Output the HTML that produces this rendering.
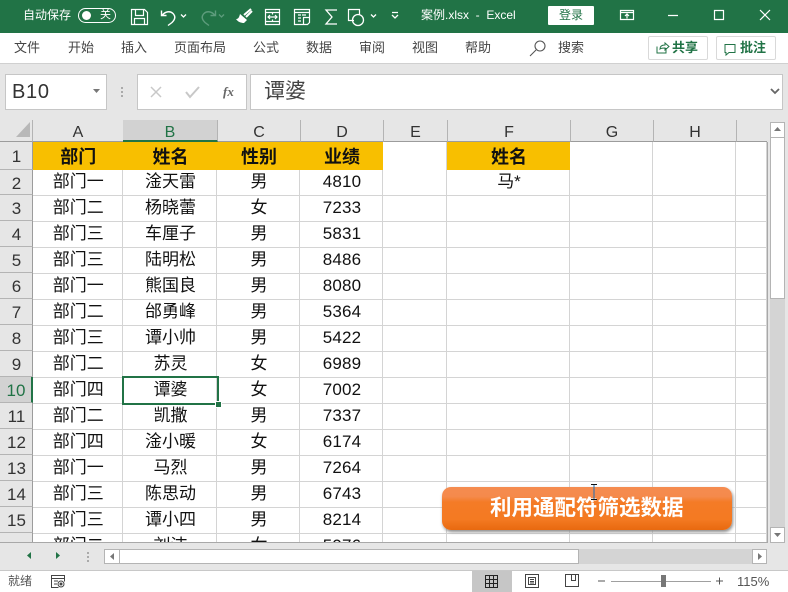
<!DOCTYPE html>
<html lang="zh"><head><meta charset="utf-8"><title>案例.xlsx - Excel</title>
<style>
html,body{margin:0;padding:0;width:788px;height:592px;overflow:hidden;background:#e6e6e6}
body{position:relative;font-family:"Liberation Sans","Noto Sans CJK SC",sans-serif;color:#222}
.a{position:absolute}
.t{position:absolute;white-space:nowrap;line-height:1}
svg{position:absolute;overflow:visible}
#tb{left:0;top:0;width:788px;height:33px;background:#217346}
#rb{left:0;top:33px;width:788px;height:30px;background:#fff;border-bottom:1px solid #d0d0d0}
.tab{font-size:13px;color:#444;top:41px}
.box{background:#fff;border:1px solid #c6c6c6;box-sizing:border-box}
#g{left:33px;top:142px;width:734px;height:400px;overflow:hidden;background:#fff}
table{border-collapse:collapse;table-layout:fixed;width:734px;position:absolute;left:-1px;top:0}
td{padding:0 0 1px 3px;border-right:1px solid #d4d4d4;border-bottom:1px solid #d4d4d4;line-height:23px;text-align:center;font-size:17px;color:#111;overflow:hidden;white-space:nowrap;box-sizing:border-box;height:26px}
td.n{font-size:17px;letter-spacing:.2px}
tr.h td{height:28px;padding:2px 0 0 3px;font-size:18px;font-weight:bold;border-bottom:none}
tr.h td.y{background:#f8bf00;border-right-color:#f8bf00}
.rh{position:absolute;left:0;width:33px;padding-left:1px;text-align:center;background:#e6e6e6;border-bottom:1px solid #b4b4b4;border-right:1px solid #9c9c9c;box-sizing:border-box;font-size:17px;line-height:28px;height:26px;color:#333}
.ch{position:absolute;top:120px;height:22px;background:#e6e6e6;border-right:1px solid #b4b4b4;box-sizing:border-box;text-align:center;font-size:16px;line-height:25px;color:#333;border-bottom:1px solid #9c9c9c}
</style></head><body>

<div class="a" id="tb"></div>
<div class="t" style="left:23px;top:9px;font-size:12px;color:#fff">自动保存</div>
<div class="a" style="left:78px;top:8px;width:38px;height:15px;border:1px solid #fff;border-radius:8px;box-sizing:border-box"></div>
<div class="a" style="left:82px;top:11px;width:9px;height:9px;background:#fff;border-radius:50%"></div>
<div class="t" style="left:100px;top:10px;font-size:11px;color:#fff">关</div>

<svg style="left:0;top:0" width="788" height="33" fill="none" stroke="#fff" stroke-width="1.2">
<path d="M131.500 9.500h13l3 3v12h-16zM135.500 9.500v6h8v-6M134.500 24.500v-6h10v6"/>
<path d="M161.500 10.500v5h5M162 15.500c3-4 8-5 11-2 3 3 2 6-1 9l-4 3" stroke-width="1.400"/>
<path d="M181 14.500l2.500 2.500 2.500-2.500" stroke-width="1.300"/>
<g stroke="#5d9c7c"><path d="M215.500 10.500v5h-5M215 15.500c-3-4-8-5-11-2-3 3-2 6 1 9l4 3" stroke-width="1.400"/><path d="M219 14.500l2.500 2.500 2.500-2.500" stroke-width="1.300"/></g>
<path d="M251 9l-7 6M252 11l-6 6" stroke-width="2"/><path d="M240 14l7 6-3 3c-3 0-6-1-8-4 2 0 3-1 4-5z" fill="#fff" stroke="none"/>
<path d="M265.500 9.500h14v15h-14zM265.500 12.500h14M265.500 21.500h14M272.500 12.500v2M272.500 19.500v2M268 17h9M270 15l-2 2 2 2M275 15l2 2-2 2"/>
<path d="M294.500 9.500h15v3h-15zM294.500 12.500v12h9M309.500 12.500v6M298 15h3M302 15h4M298 18h3M298 21h3M303.500 17.500h6v5l-2 2h-4z"/>
<path d="M337 10h-11l6 7-6 7h11" stroke-width="1.300"/>
<path d="M354 20.500h-5.500v-11h11v5"/><circle cx="358" cy="20" r="5.500" stroke-width="1.300"/>
<path d="M371 14.500l2.500 2.500 2.500-2.500" stroke-width="1.300"/>
<path d="M392 12.500h6M392 15l3 3 3-3" stroke-width="1.300"/>
<path d="M620.500 10.500h13v9h-13zM620.500 12.500h13M627 18.500v-4M625 16l2-2 2 2"/>
<path d="M668 15.500h10M714.500 10.500h9v9h-9zM760 10l10 10M770 10l-10 10"/>
</svg>
<div class="t" style="left:421px;top:9px;font-size:12px;color:#fff">案例.xlsx&nbsp; -&nbsp; Excel</div>
<div class="a" style="left:548px;top:6px;width:46px;height:19px;background:#fff;border-radius:1px"></div>
<div class="t" style="left:559px;top:9px;font-size:12px;color:#217346">登录</div>

<div class="a" id="rb"></div>
<div class="t tab" style="left:14px">文件</div>
<div class="t tab" style="left:68px">开始</div>
<div class="t tab" style="left:121px">插入</div>
<div class="t tab" style="left:174px">页面布局</div>
<div class="t tab" style="left:253px">公式</div>
<div class="t tab" style="left:306px">数据</div>
<div class="t tab" style="left:359px">审阅</div>
<div class="t tab" style="left:412px">视图</div>
<div class="t tab" style="left:465px">帮助</div>
<svg style="left:0;top:0" width="788" height="64" fill="none" stroke="#555" stroke-width="1.100"><circle cx="540" cy="46" r="5"/><path d="M536 50l-6 6"/></svg>
<div class="t tab" style="left:558px">搜索</div>
<div class="a" style="left:648px;top:36px;width:60px;height:24px;border:1px solid #d9d9d9;border-radius:2px;box-sizing:border-box"></div>
<div class="a" style="left:716px;top:36px;width:60px;height:24px;border:1px solid #d9d9d9;border-radius:2px;box-sizing:border-box"></div>
<svg style="left:0;top:0" width="788" height="64" fill="none" stroke="#217346" stroke-width="1">
<path d="M657 46.500v6.500h9v-5M660 49c0-3 2-4 5-4v-2l4 3.500-4 3.500v-2c-2 0-4 0-5 1z"/>
<path d="M725 44.500h10v8h-6l-3 2.500v-2.500h-1z"/></svg>
<div class="t" style="left:672px;top:41px;font-size:13px;font-weight:bold;color:#217346">共享</div>
<div class="t" style="left:740px;top:41px;font-size:13px;font-weight:bold;color:#217346">批注</div>

<div class="a box" style="left:5px;top:74px;width:102px;height:36px"></div>
<div class="t" style="left:12px;top:82px;font-size:20px;letter-spacing:.7px;color:#333">B10</div>
<div class="a box" style="left:137px;top:74px;width:110px;height:36px"></div>
<div class="t" style="left:223px;top:85px;font-size:13px;font-family:'Liberation Serif',serif;font-style:italic;font-weight:bold;color:#666">fx</div>
<div class="a box" style="left:250px;top:74px;width:533px;height:36px"></div>
<div class="t" style="left:264px;top:81px;font-size:21px;color:#444">谭婆</div>
<svg style="left:0;top:0" width="788" height="120" fill="none">
<path d="M93 89h7l-3.500 4z" fill="#777"/>
<path d="M122 87v2M122 91v2M122 95v2" stroke="#aaa" stroke-width="2"/>
<path d="M151 87l10 10M161 87l-10 10" stroke="#c8c8c8" stroke-width="1.500"/>
<path d="M186 92l4 5 9-10" stroke="#c8c8c8" stroke-width="2"/>
<path d="M771 89l4 4 4-4" stroke="#666" stroke-width="1.800"/>
</svg>

<div class="a" style="left:0;top:120px;width:33px;height:22px;background:#e6e6e6;border-right:1px solid #b4b4b4;border-bottom:1px solid #9c9c9c;box-sizing:border-box"></div>
<svg style="left:0;top:0" width="40" height="142"><path d="M30 122v15h-14z" fill="#b8b8b8"/></svg>
<div class="ch" style="left:33px;width:91px">A</div>
<div class="ch" style="left:123px;width:95px;background:#d2d2d2;color:#217346;border-bottom:2px solid #217346">B</div>
<div class="ch" style="left:218px;width:83px">C</div>
<div class="ch" style="left:301px;width:83px">D</div>
<div class="ch" style="left:384px;width:64px">E</div>
<div class="ch" style="left:448px;width:123px">F</div>
<div class="ch" style="left:571px;width:83px">G</div>
<div class="ch" style="left:654px;width:83px">H</div>
<div class="ch" style="left:737px;width:30px;border-right:none"></div>

<div class="rh" style="top:142px;height:28px;line-height:30px">1</div>
<div class="rh" style="top:170px;height:25px">2</div>
<div class="rh" style="top:195px">3</div>
<div class="rh" style="top:221px">4</div>
<div class="rh" style="top:247px">5</div>
<div class="rh" style="top:273px">6</div>
<div class="rh" style="top:299px">7</div>
<div class="rh" style="top:325px">8</div>
<div class="rh" style="top:351px">9</div>
<div class="rh" style="top:377px;background:#d2d2d2;color:#217346;border-right:2px solid #217346">10</div>
<div class="rh" style="top:403px">11</div>
<div class="rh" style="top:429px">12</div>
<div class="rh" style="top:455px">13</div>
<div class="rh" style="top:481px">14</div>
<div class="rh" style="top:507px">15</div>
<div class="rh" style="top:533px;height:9px;border-bottom:none"></div>

<div class="a" id="g">
<table>
<colgroup><col style="width:90px"><col style="width:94px"><col style="width:83px"><col style="width:83px"><col style="width:64px"><col style="width:123px"><col style="width:83px"><col style="width:83px"><col style="width:31px"></colgroup>
<tr class="h"><td class="y">部门</td><td class="y">姓名</td><td class="y">性别</td><td class="y">业绩</td><td></td><td class="y">姓名</td><td></td><td></td><td></td></tr>
<tr style="height:25px"><td style="height:25px">部门一</td><td style="height:25px">淦天雷</td><td style="height:25px">男</td><td class="n" style="height:25px">4810</td><td style="height:25px"></td><td style="height:25px">马*</td><td style="height:25px"></td><td style="height:25px"></td><td style="height:25px"></td></tr>
<tr><td>部门二</td><td>杨晓蕾</td><td>女</td><td class="n">7233</td><td></td><td></td><td></td><td></td><td></td></tr>
<tr><td>部门三</td><td>车厘子</td><td>男</td><td class="n">5831</td><td></td><td></td><td></td><td></td><td></td></tr>
<tr><td>部门三</td><td>陆明松</td><td>男</td><td class="n">8486</td><td></td><td></td><td></td><td></td><td></td></tr>
<tr><td>部门一</td><td>熊国良</td><td>男</td><td class="n">8080</td><td></td><td></td><td></td><td></td><td></td></tr>
<tr><td>部门二</td><td>邰勇峰</td><td>男</td><td class="n">5364</td><td></td><td></td><td></td><td></td><td></td></tr>
<tr><td>部门三</td><td>谭小帅</td><td>男</td><td class="n">5422</td><td></td><td></td><td></td><td></td><td></td></tr>
<tr><td>部门二</td><td>苏灵</td><td>女</td><td class="n">6989</td><td></td><td></td><td></td><td></td><td></td></tr>
<tr><td>部门四</td><td>谭婆</td><td>女</td><td class="n">7002</td><td></td><td></td><td></td><td></td><td></td></tr>
<tr><td>部门二</td><td>凯撒</td><td>男</td><td class="n">7337</td><td></td><td></td><td></td><td></td><td></td></tr>
<tr><td>部门四</td><td>淦小暖</td><td>女</td><td class="n">6174</td><td></td><td></td><td></td><td></td><td></td></tr>
<tr><td>部门一</td><td>马烈</td><td>男</td><td class="n">7264</td><td></td><td></td><td></td><td></td><td></td></tr>
<tr><td>部门三</td><td>陈思动</td><td>男</td><td class="n">6743</td><td></td><td></td><td></td><td></td><td></td></tr>
<tr><td>部门三</td><td>谭小四</td><td>男</td><td class="n">8214</td><td></td><td></td><td></td><td></td><td></td></tr>
<tr><td>部门二</td><td>刘洁</td><td>女</td><td class="n">5976</td><td></td><td></td><td></td><td></td><td></td></tr>
</table>
</div>

<div class="a" style="left:122px;top:376px;width:97px;height:29px;border:2px solid #217346;box-sizing:border-box"></div>
<div class="a" style="left:215px;top:401px;width:5px;height:5px;background:#217346;border:1px solid #fff"></div>

<div class="a" style="left:767px;top:142px;width:1px;height:401px;background:#a8a8a8"></div>
<div class="a" style="left:0;top:542px;width:768px;height:1px;background:#a8a8a8"></div>

<div class="a" style="left:770px;top:122px;width:15px;height:420px;background:#d4d4d4"></div>
<div class="a box" style="left:770px;top:122px;width:15px;height:16px;border-color:#b4b4b4"></div>
<div class="a box" style="left:770px;top:137px;width:15px;height:162px;border-color:#b4b4b4"></div>
<div class="a box" style="left:770px;top:527px;width:15px;height:16px;border-color:#b4b4b4"></div>
<svg style="left:0;top:0" width="788" height="592"><path d="M774 131l3.500-4 3.500 4z" fill="#777"/><path d="M774 533h7l-3.500 4z" fill="#777"/></svg>

<div class="a" style="left:104px;top:549px;width:663px;height:15px;background:#d4d4d4"></div>
<div class="a box" style="left:104px;top:549px;width:16px;height:15px;border-color:#b4b4b4"></div>
<div class="a box" style="left:119px;top:549px;width:460px;height:15px;border-color:#b4b4b4"></div>
<div class="a box" style="left:752px;top:549px;width:15px;height:15px;border-color:#b4b4b4"></div>
<svg style="left:0;top:0" width="788" height="592">
<path d="M31 552v7l-4-3.500z" fill="#217346"/><path d="M56 552v7l4-3.500z" fill="#217346"/>
<path d="M88 552v2M88 556v2M88 560v2" stroke="#aaa" stroke-width="2"/>
<path d="M114 553v7l-4-3.500z" fill="#777"/><path d="M758 553v7l4-3.500z" fill="#777"/>
</svg>

<div class="a" style="left:0;top:570px;width:788px;height:22px;background:#fff;border-top:1px solid #c8c8c8;box-sizing:border-box"></div>
<div class="t" style="left:8px;top:575px;font-size:12px;color:#555">就绪</div>
<div class="a" style="left:472px;top:571px;width:40px;height:21px;background:#c6c6c6"></div>
<svg style="left:0;top:0" width="788" height="592" fill="none" stroke="#444" stroke-width="1">
<path d="M51.500 575.500h13v3h-13zM51.500 578.500v9h7M64.500 578.500v3M54 581h4M54 584h3"/><circle cx="61" cy="584" r="3"/><circle cx="61" cy="584" r="1" fill="#444"/>
<path d="M485.500 575.500h12v12h-12zM485.500 579.500h12M485.500 583.500h12M489.500 575.500v12M493.500 575.500v12" stroke="#222"/>
<path d="M525.500 574.500h13v13h-13zM528.500 577.500h7v7h-7zM530 579.500h4M530 581.500h4M530 583h4"/>
<path d="M565.500 574.500h13v12h-13zM571.500 574.500v6h4v-6"/>
<path d="M598 581h7M716 581h7M719.500 577.500v7" stroke="#555"/>
<path d="M611 581.500h100" stroke="#a0a0a0"/>
</svg>
<div class="a" style="left:661px;top:575px;width:5px;height:12px;background:#777"></div>
<div class="t" style="left:737px;top:575px;font-size:13px;color:#555">115%</div>

<div class="a" style="left:442px;top:487px;width:290px;height:43px;border-radius:9px;background:linear-gradient(#f58c50 0%,#f58a4c 22%,#f47b26 35%,#f47a22 75%,#e8690f 100%);box-shadow:1px 2px 3px #8a8a8a"></div>
<div class="t" style="left:490px;top:498px;font-size:21.500px;font-weight:bold;color:#fff">利用通配符筛选数据</div>
<svg style="left:0;top:0" width="788" height="592" fill="none"><path d="M591 484.500h6M594 484.500v15" stroke="#1f6fb5" stroke-width="1"/><path d="M591 484.500h6M591 499.500h6" stroke="#111"/></svg>
</body></html>
